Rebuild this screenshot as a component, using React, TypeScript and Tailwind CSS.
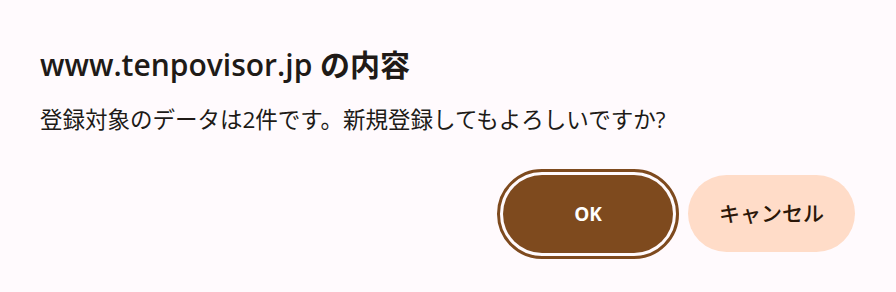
import React from 'react';

export default function App() {
    const font = { fontFamily: '"Open Sans", "Noto Sans CJK JP", sans-serif' };
    return (
        <div className="w-[896px] h-[292px] bg-[#fffafd] text-[#201a17]" style={font}>
            <div className="pl-10 pr-[41px] pt-[46px]">
                <h1 className="text-[30px] leading-[38px] font-semibold">www.tenpovisor.jp の内容</h1>
                <p className="mt-[21px] text-[22.5px] leading-[30px]">登録対象のデータは2件です。新規登録してもよろしいですか?</p>
                <div className="mt-[40px] flex justify-end gap-[15px]">
                    <button className="w-[170px] h-[78px] rounded-full bg-[#7e4a1e] text-white text-[19px] font-bold outline-[3px] outline-solid outline-[#7e4a1e] outline-offset-[3px]">
                        OK
                    </button>
                    <button className="w-[167px] h-[77px] rounded-full bg-[#ffdcc8] text-[#2b1708] text-[21px] font-medium">
                        キャンセル
                    </button>
                </div>
            </div>
        </div>
    );
}
